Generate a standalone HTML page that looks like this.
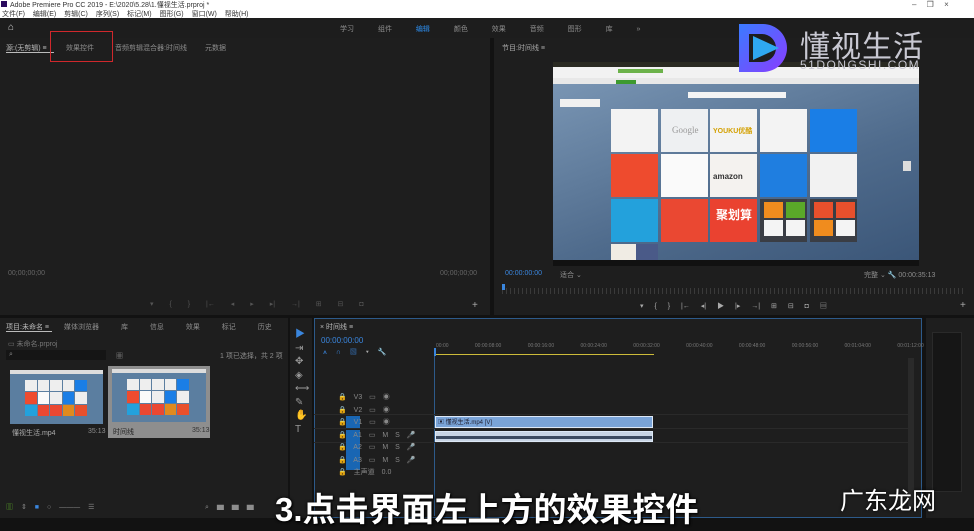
<!DOCTYPE html>
<html><head><meta charset="utf-8"><style>
*{margin:0;padding:0;box-sizing:border-box}
body{width:974px;height:524px;overflow:hidden;background:#121212;font-family:"Liberation Sans","Noto Sans CJK SC",sans-serif;position:relative;color:#9a9a9a;font-size:8px}
.a{position:absolute}
.p{position:absolute;background:#1e1e1e}
.t{position:absolute;white-space:nowrap;font-size:7px;color:#8d8d8d}
.tile{position:absolute;width:47px;height:43px}
.th{position:absolute;display:grid;grid-template-columns:repeat(5,1fr);gap:1px}
.th i{display:block}
</style></head><body>
<!-- title / menu -->
<div class="a" style="left:0;top:0;width:974px;height:18px;background:#fff"></div>
<div class="a" style="left:1px;top:1px;width:6px;height:6px;background:#2a0a5e"></div>
<div class="t" style="left:10px;top:0;color:#333;font-size:7px">Adobe Premiere Pro CC 2019 - E:\2020\5.28\1.懂视生活.prproj *</div>
<div class="t" style="left:2px;top:9px;color:#333;font-size:7px;word-spacing:6px">文件(F) 编辑(E) 剪辑(C) 序列(S) 标记(M) 图形(G) 窗口(W) 帮助(H)</div>
<div class="t" style="left:912px;top:0;color:#555;font-size:8px;word-spacing:8px">– ❐ ×</div>
<!-- workspace bar -->
<div class="a" style="left:0;top:18px;width:974px;height:20px;background:#1d1d1d"></div>
<div class="t" style="left:8px;top:22px;color:#ccc;font-size:10px">⌂</div>
<div class="t" style="left:340px;top:24px;word-spacing:22px">学习 组件 <span style="color:#2d8ceb">编辑</span> 颜色 效果 音频 图形 库 »</div>
<!-- left top panel -->
<div class="p" style="left:0;top:38px;width:490px;height:277px"></div>
<div class="t" style="left:6px;top:43px;color:#bbb">源:(无剪辑) ≡</div>
<div class="a" style="left:6px;top:52px;width:48px;height:1px;background:#bbb"></div>
<div class="t" style="left:66px;top:43px">效果控件</div>
<div class="t" style="left:115px;top:43px">音频剪辑混合器:时间线</div>
<div class="t" style="left:205px;top:43px">元数据</div>
<div class="a" style="left:50px;top:31px;width:63px;height:31px;border:1.5px solid #d0282c"></div>
<div class="t" style="left:8px;top:270px;color:#666">00;00;00;00</div>
<div class="t" style="left:440px;top:270px;color:#666">00;00;00;00</div>
<div class="t" style="left:150px;top:300px;color:#555;word-spacing:14px">▾ { } |← ◂ ▸ ▸| →| ⊞ ⊟ ◘</div>
<div class="t" style="left:472px;top:300px;color:#aaa;font-size:10px">+</div>
<!-- program monitor -->
<div class="p" style="left:494px;top:38px;width:480px;height:277px"></div>
<div class="t" style="left:502px;top:43px;color:#aaa">节目:时间线 ≡</div>
<div class="a" style="left:553px;top:62px;width:366px;height:204px;background:linear-gradient(160deg,#7e9ab8,#4f6b8c 60%,#3a5577)"></div>
<div class="a" style="left:553px;top:62px;width:366px;height:5px;background:#2a2a22"></div>
<div class="a" style="left:553px;top:67px;width:366px;height:11px;background:#f2f2f2"></div>
<div class="a" style="left:553px;top:78px;width:366px;height:6px;background:#e8e8e8"></div>
<div class="a" style="left:618px;top:69px;width:45px;height:4px;background:#6cb24a"></div>
<div class="a" style="left:616px;top:80px;width:20px;height:4px;background:#3d9a2f"></div>
<div class="a" style="left:688px;top:92px;width:98px;height:6px;background:#f4f4f4"></div>
<div class="a" style="left:560px;top:99px;width:40px;height:8px;background:#f0f0f0"></div>
<div class="tile" style="left:611px;top:109px;background:#f3f3f3"></div>
<div class="tile" style="left:661px;top:109px;background:#eef0f2"></div>
<div class="tile" style="left:710px;top:109px;background:#f3f3f3"></div>
<div class="tile" style="left:760px;top:109px;background:#f3f3f3"></div>
<div class="tile" style="left:810px;top:109px;background:#1a7ee6"></div>
<div class="tile" style="left:611px;top:154px;background:#ee4b2e"></div>
<div class="tile" style="left:661px;top:154px;background:#fafafa"></div>
<div class="tile" style="left:710px;top:154px;background:#f4f2ef"></div>
<div class="tile" style="left:760px;top:154px;background:#1f7ee0"></div>
<div class="tile" style="left:810px;top:154px;background:#f2f2f2"></div>
<div class="tile" style="left:611px;top:199px;background:#23a1dc"></div>
<div class="tile" style="left:661px;top:199px;background:#ea4832"></div>
<div class="tile" style="left:710px;top:199px;background:#ea4230"></div>
<div class="tile" style="left:760px;top:199px;background:#3a3d44"></div>
<div class="tile" style="left:810px;top:199px;background:#3a3d44"></div>
<div class="a" style="left:764px;top:202px;width:19px;height:16px;background:#f08c1e"></div>
<div class="a" style="left:786px;top:202px;width:19px;height:16px;background:#5aa829"></div>
<div class="a" style="left:764px;top:220px;width:19px;height:16px;background:#f4f4f4"></div>
<div class="a" style="left:786px;top:220px;width:19px;height:16px;background:#f4f4f4"></div>
<div class="a" style="left:814px;top:202px;width:19px;height:16px;background:#e8502c"></div>
<div class="a" style="left:836px;top:202px;width:19px;height:16px;background:#e8502c"></div>
<div class="a" style="left:814px;top:220px;width:19px;height:16px;background:#f08c1e"></div>
<div class="a" style="left:836px;top:220px;width:19px;height:16px;background:#f4f4f4"></div>
<div class="t" style="left:716px;top:206px;color:#fff;font-size:12px;font-weight:bold">聚划算</div>
<div class="t" style="left:672px;top:125px;color:#999;font-size:9px;font-family:'Liberation Serif'">Google</div>
<div class="t" style="left:713px;top:126px;color:#d4a000;font-size:7px;font-weight:bold">YOUKU优酷</div>
<div class="t" style="left:713px;top:172px;color:#333;font-size:8px;font-weight:bold">amazon</div>
<div class="tile" style="left:611px;top:244px;height:18px;background:#f0ece4"></div>
<div class="tile" style="left:636px;top:244px;width:22px;height:18px;background:#4a5a88"></div>
<div class="a" style="left:553px;top:260px;width:366px;height:6px;background:#111"></div>
<div class="a" style="left:903px;top:161px;width:8px;height:10px;background:#ddd"></div>
<div class="t" style="left:505px;top:270px;color:#3a86de">00:00:00:00</div>
<div class="t" style="left:560px;top:270px">适合 ⌄</div>
<div class="t" style="left:864px;top:270px">完整 ⌄ 🔧 00:00:35:13</div>
<div class="a" style="left:502px;top:288px;width:464px;height:6px;background:repeating-linear-gradient(90deg,#3a3a3a 0 1px,transparent 1px 4px)"></div>
<div class="a" style="left:502px;top:284px;width:3px;height:6px;background:#3a86de"></div>
<div class="t" style="left:640px;top:301px;color:#aaa;word-spacing:9px">▾ { } |← ◂| ▶ |▸ →| ⊞ ⊟ ◘ ▤</div>
<div class="t" style="left:960px;top:300px;color:#aaa;font-size:10px">+</div>
<!-- project panel -->
<div class="p" style="left:0;top:318px;width:288px;height:200px"></div>
<div class="t" style="left:6px;top:322px;color:#bbb">项目:未命名 ≡</div>
<div class="a" style="left:6px;top:331px;width:46px;height:1px;background:#bbb"></div>
<div class="t" style="left:64px;top:322px;word-spacing:20px">媒体浏览器 库 信息 效果 标记 历史 »</div>
<div class="t" style="left:8px;top:339px;color:#777">▭ 未命名.prproj</div>
<div class="a" style="left:6px;top:350px;width:100px;height:10px;background:#151515"></div>
<div class="t" style="left:9px;top:351px">⌕</div>
<div class="t" style="left:116px;top:351px">▦</div>
<div class="t" style="left:220px;top:351px">1 项已选择，共 2 项</div>
<div class="a" style="left:10px;top:370px;width:93px;height:54px;background:#5b7ea0"></div>
<div class="a" style="left:10px;top:370px;width:93px;height:4px;background:#ddd"></div>
<div class="th" style="left:25px;top:380px;width:62px;height:36px">
<i style="background:#eee"></i><i style="background:#eee"></i><i style="background:#eee"></i><i style="background:#eee"></i><i style="background:#1a7ee6"></i>
<i style="background:#ee4b2e"></i><i style="background:#fafafa"></i><i style="background:#eee"></i><i style="background:#1a7ee6"></i><i style="background:#eee"></i>
<i style="background:#23a1dc"></i><i style="background:#ea4832"></i><i style="background:#ea4832"></i><i style="background:#e08a1e"></i><i style="background:#e8502c"></i></div>
<div class="t" style="left:12px;top:428px;color:#aaa">懂视生活.mp4</div>
<div class="t" style="left:88px;top:428px">35:13</div>
<div class="a" style="left:108px;top:366px;width:102px;height:72px;background:#8e8e8e"></div>
<div class="a" style="left:112px;top:369px;width:94px;height:53px;background:#5b7ea0"></div>
<div class="a" style="left:112px;top:369px;width:94px;height:4px;background:#ddd"></div>
<div class="th" style="left:127px;top:379px;width:62px;height:36px">
<i style="background:#eee"></i><i style="background:#eee"></i><i style="background:#eee"></i><i style="background:#eee"></i><i style="background:#1a7ee6"></i>
<i style="background:#ee4b2e"></i><i style="background:#fafafa"></i><i style="background:#eee"></i><i style="background:#1a7ee6"></i><i style="background:#eee"></i>
<i style="background:#23a1dc"></i><i style="background:#ea4832"></i><i style="background:#ea4832"></i><i style="background:#e08a1e"></i><i style="background:#e8502c"></i></div>
<div class="t" style="left:113px;top:427px;color:#222">时间线</div>
<div class="t" style="left:192px;top:427px;color:#333">35:13</div>
<div class="t" style="left:6px;top:502px;color:#5aa829;word-spacing:6px">▥ <span style="color:#888">⇕</span> <span style="color:#3a86de">■</span> <span style="color:#888">○ ——— ☰</span></div>
<div class="t" style="left:205px;top:502px;word-spacing:6px">⌕ ▆ ▆ ▆</div>
<!-- tools -->
<div class="p" style="left:290px;top:318px;width:22px;height:200px"></div>
<div class="t" style="left:295px;top:328px;color:#3a86de;font-size:10px;line-height:13.5px;white-space:pre">▶<span style="color:#999">
⇥
✥
◈
⟷
✎
✋
T</span></div>
<!-- timeline -->
<div class="p" style="left:314px;top:318px;width:608px;height:200px;border:1px solid #2d5a8a"></div>
<div class="t" style="left:320px;top:322px;color:#bbb">× 时间线 ≡</div>
<div class="t" style="left:321px;top:336px;color:#3a86de;font-size:8px">00:00:00:00</div>
<div class="t" style="left:323px;top:347px;color:#3a86de;word-spacing:7px">⩚ ∩ ▧ <span style="color:#aaa">▾ 🔧</span></div>
<div class="t" style="left:436px;top:343px;color:#777;font-size:5px;word-spacing:25px">00:00 00:00:08:00 00:00:16:00 00:00:24:00 00:00:32:00 00:00:40:00 00:00:48:00 00:00:56:00 00:01:04:00 00:01:12:00</div>
<div class="a" style="left:434px;top:354px;width:220px;height:1px;background:#cdbb3a"></div>
<div class="a" style="left:434px;top:348px;width:2px;height:8px;background:#3a86de"></div>
<div class="a" style="left:434px;top:356px;width:1px;height:160px;background:#2d5a8a"></div>
<div class="a" style="left:314px;top:414px;width:600px;height:1px;background:#2a2a2a"></div>
<div class="a" style="left:314px;top:428px;width:600px;height:1px;background:#2a2a2a"></div>
<div class="a" style="left:314px;top:442px;width:600px;height:1px;background:#2a2a2a"></div>
<div class="a" style="left:346px;top:416px;width:14px;height:12px;background:#1966b3"></div>
<div class="a" style="left:346px;top:430px;width:14px;height:40px;background:#1966b3"></div>
<div class="t" style="left:338px;top:392px;line-height:12.5px;white-space:pre;color:#888;word-spacing:5px">🔒 V3 ▭ ◉
🔒 V2 ▭ ◉
🔒 V1 ▭ ◉
🔒 A1 ▭ M S 🎤
🔒 A2 ▭ M S 🎤
🔒 A3 ▭ M S 🎤
🔒 主声道 0.0</div>
<div class="a" style="left:435px;top:416px;width:218px;height:12px;background:#7aa4d8;border:1px solid #dde8f6"></div>
<div class="t" style="left:438px;top:417px;color:#223;font-size:6px">▣ 懂视生活.mp4 [V]</div>
<div class="a" style="left:435px;top:431px;width:218px;height:11px;background:#c8d4e4;border:1px solid #dde8f6"></div>
<div class="a" style="left:436px;top:436px;width:216px;height:3px;background:#3c4a60"></div>
<div class="a" style="left:908px;top:358px;width:6px;height:150px;background:#2a2a2a"></div>
<!-- audio meter -->
<div class="p" style="left:926px;top:318px;width:48px;height:200px"></div>
<div class="a" style="left:932px;top:332px;width:30px;height:160px;background:#161616;border:1px solid #2a2a2a"></div>
<!-- logo -->
<svg class="a" style="left:735px;top:20px" width="60" height="56" viewBox="0 0 60 56">
<defs><linearGradient id="g" x1="0" y1="0" x2="1" y2="1"><stop offset="0" stop-color="#3a7bff"/><stop offset="1" stop-color="#8a3cff"/></linearGradient></defs>
<path d="M4 4 H28 A24 24 0 0 1 28 52 H4 Z M14 14 V42 H27 A14 14 0 0 0 27 14 Z" fill="url(#g)" fill-rule="evenodd"/>
<path d="M18 16 L44 28 L18 40 Z" fill="#2fa8f0"/>
</svg>
<div class="t" style="left:800px;top:22px;color:#c8c8d2;font-size:30px;letter-spacing:1px">懂视生活</div>
<div class="t" style="left:800px;top:58px;color:#c8c8d2;font-size:12px;letter-spacing:1.5px">51DONGSHI.COM</div>
<!-- subtitles -->
<div class="t" style="left:275px;top:483px;color:#fff;font-size:33px;font-weight:bold;text-shadow:0 0 3px #000,1px 1px 2px #000">3.点击界面左上方的效果控件</div>
<div class="t" style="left:840px;top:481px;color:#fff;font-size:24px;text-shadow:0 0 3px #000">广东龙网</div>
</body></html>
